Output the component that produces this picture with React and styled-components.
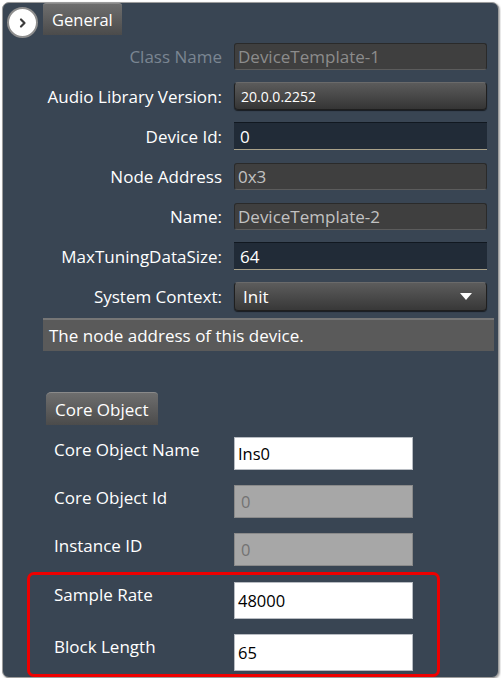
import styled, { createGlobalStyle } from "styled-components";

const GlobalStyle = createGlobalStyle`
  html, body {
    margin: 0;
    padding: 0;
    background: #ffffff;
  }
  body {
    font-family: "Open Sans", "Noto Sans", sans-serif;
  }
`;

const general = [
  { label: "Class Name", value: "DeviceTemplate-1", kind: "readonly", muted: true },
  { label: "Audio Library Version:", value: "20.0.0.2252", kind: "button" },
  { label: "Device Id:", value: "0", kind: "edit" },
  { label: "Node Address", value: "0x3", kind: "readonly" },
  { label: "Name:", value: "DeviceTemplate-2", kind: "readonly" },
  { label: "MaxTuningDataSize:", value: "64", kind: "edit" },
  { label: "System Context:", value: "Init", kind: "select" },
];

function App() {
  return (
    <>
      <GlobalStyle />
      <Panel>
        <Header>
          <CircleButton>
            <svg width="12" height="12" viewBox="0 0 12 12">
              <path d="M4 2.5 L7.5 6 L4 9.5" fill="none" stroke="#3c3c3c" strokeWidth="2.2" strokeLinecap="round" strokeLinejoin="round" />
            </svg>
          </CircleButton>
          <Tab>General</Tab>
        </Header>

        <FormGrid>
          {general.map((row) => (
            <Row key={row.label}>
              <Label $muted={row.muted}>{row.label}</Label>
              {row.kind === "readonly" && <ReadOnlyField $muted={row.muted}>{row.value}</ReadOnlyField>}
              {row.kind === "button" && <ButtonField>{row.value}</ButtonField>}
              {row.kind === "edit" && <EditField>{row.value}</EditField>}
              {row.kind === "select" && (
                <SelectField>
                  <span>{row.value}</span>
                  <svg width="12" height="7" viewBox="0 0 12 7">
                    <path d="M0 0 H12 L6 7 Z" fill="#ffffff" />
                  </svg>
                </SelectField>
              )}
            </Row>
          ))}
        </FormGrid>

        <Description>The node address of this device.</Description>

        <CoreTab>Core Object</CoreTab>

        <CoreGrid>
          <CoreRow>
            <CoreLabel>Core Object Name</CoreLabel>
            <WhiteInput>Ins0</WhiteInput>
          </CoreRow>
          <CoreRow>
            <CoreLabel>Core Object Id</CoreLabel>
            <WhiteInput $disabled>0</WhiteInput>
          </CoreRow>
          <CoreRow>
            <CoreLabel>Instance ID</CoreLabel>
            <WhiteInput $disabled>0</WhiteInput>
          </CoreRow>
        </CoreGrid>

        <Highlight>
          <CoreRow>
            <CoreLabel>Sample Rate</CoreLabel>
            <WhiteInput $tall>48000</WhiteInput>
          </CoreRow>
          <CoreRow>
            <CoreLabel>Block Length</CoreLabel>
            <WhiteInput $tall>65</WhiteInput>
          </CoreRow>
        </Highlight>
      </Panel>
    </>
  );
}

const Panel = styled.div`
  box-sizing: border-box;
  width: 497px;
  height: 676px;
  margin: 2px 0 0 2px;
  background: #394553;
  border: 1px solid #9c9c9c;
  border-radius: 7px;
  box-shadow: 1px 1px 2px rgba(0, 0, 0, 0.35);
  overflow: hidden;
  display: flex;
  flex-direction: column;
`;

const Header = styled.div`
  display: flex;
  align-items: flex-start;
  gap: 5px;
  padding-left: 4px;
  height: 32px;
`;

const CircleButton = styled.div`
  box-sizing: border-box;
  width: 31px;
  height: 31px;
  margin-top: 4px;
  border-radius: 50%;
  background: #ffffff;
  border: 2px solid #8e8e8e;
  display: flex;
  align-items: center;
  justify-content: center;
`;

const tabLook = `
  box-sizing: border-box;
  color: #ffffff;
  background: linear-gradient(#6e6e6e, #4b4b4b);
  border-top: 1px solid #8a8a8a;
  border-radius: 3px 3px 0 0;
  display: flex;
  align-items: center;
`;

const Tab = styled.div`
  ${tabLook}
  width: 79px;
  height: 32px;
  padding-left: 9px;
  font-size: 16.5px;
`;

const FormGrid = styled.div`
  display: flex;
  flex-direction: column;
  margin-top: 1px;
`;

const Row = styled.div`
  display: grid;
  grid-template-columns: 219px 253px;
  column-gap: 12px;
  align-items: center;
  height: 40px;
`;

const Label = styled.div`
  text-align: right;
  font-size: 17px;
  color: ${(p) => (p.$muted ? "#7b8692" : "#ffffff")};
  white-space: nowrap;
`;

const fieldBase = `
  box-sizing: border-box;
  display: flex;
  align-items: center;
  padding-left: 3px;
  font-size: 17px;
  white-space: nowrap;
`;

const ReadOnlyField = styled.div`
  ${fieldBase}
  height: 27px;
  background: #3f3f3f;
  border: 1px solid #2a2a2a;
  border-bottom-color: #5c5c5c;
  border-radius: 3px;
  color: ${(p) => (p.$muted ? "#8c8c8c" : "#c2c2c2")};
`;

const ButtonField = styled.div`
  ${fieldBase}
  height: 28px;
  padding-left: 6px;
  font-size: 14px;
  color: #ffffff;
  background: linear-gradient(#5b5b5b, #353535);
  border: 1px solid #1f1f1f;
  border-top-color: #6a6a6a;
  border-radius: 4px;
  box-shadow: 0 1px 1px rgba(0, 0, 0, 0.6);
`;

const EditField = styled.div`
  ${fieldBase}
  height: 28px;
  padding-left: 6px;
  color: #ffffff;
  background: #212b37;
  border-top: 1px solid #111820;
  border-bottom: 1px solid #aaa28a;
`;

const SelectField = styled.div`
  ${fieldBase}
  height: 29px;
  padding: 0 14px 0 8px;
  justify-content: space-between;
  color: #ffffff;
  background: linear-gradient(#5c5c5c, #383838);
  border: 1px solid #1f1f1f;
  border-top-color: #6a6a6a;
  border-radius: 4px;
  box-shadow: 0 1px 1px rgba(0, 0, 0, 0.6);
`;

const Description = styled.div`
  box-sizing: border-box;
  height: 33px;
  margin: 2px 4px 0 40px;
  padding-left: 6px;
  display: flex;
  align-items: center;
  font-size: 17px;
  color: #ffffff;
  background: #5a5a5a;
  border-top: 2px solid #767676;
`;

const CoreTab = styled.div`
  ${tabLook}
  width: 112px;
  height: 33px;
  margin: 41px 0 0 43px;
  padding-left: 9px;
  font-size: 17px;
  border-radius: 5px 4px 0 0;
`;

const CoreGrid = styled.div`
  display: flex;
  flex-direction: column;
  gap: 15px;
  margin: 12px 0 0 51px;
`;

const CoreRow = styled.div`
  display: grid;
  grid-template-columns: 180px 179px;
  align-items: start;
`;

const CoreLabel = styled.div`
  font-size: 17px;
  color: #ffffff;
  padding-top: 1px;
  white-space: nowrap;
`;

const WhiteInput = styled.div`
  box-sizing: border-box;
  height: ${(p) => (p.$tall ? "37px" : "33px")};
  display: flex;
  align-items: center;
  padding-left: ${(p) => (p.$disabled ? "6px" : "3px")};
  font-size: 16.5px;
  background: ${(p) => (p.$disabled ? "#a7a7a7" : "#ffffff")};
  color: ${(p) => (p.$disabled ? "#737373" : "#000000")};
  border: 1px solid ${(p) => (p.$disabled ? "#8a8a8a" : "#b8bcc2")};
`;

const Highlight = styled.div`
  box-sizing: border-box;
  display: flex;
  flex-direction: column;
  gap: 15px;
  width: 413px;
  margin: 6px 0 0 24px;
  padding: 7px 0 3px 24px;
  border: 3px solid #ee0000;
  border-radius: 7px;
`;

export default App;
